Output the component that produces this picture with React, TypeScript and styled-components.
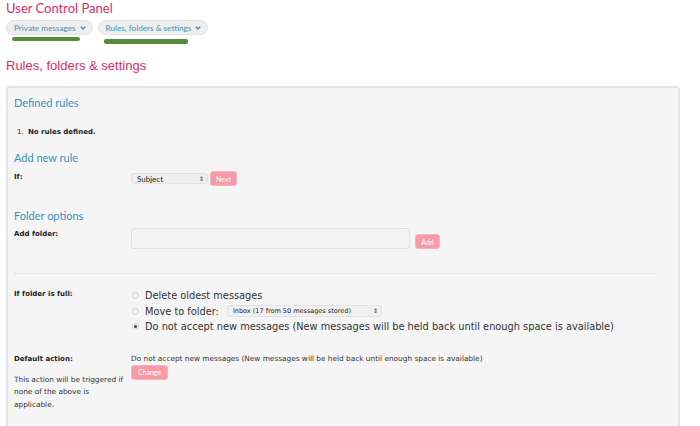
import styled, { createGlobalStyle } from "styled-components";

const GlobalStyle = createGlobalStyle`
  html, body {
    margin: 0;
    padding: 0;
    background: #fff;
    font-family: "DejaVu Sans", Verdana, sans-serif;
  }
`;

const PINK = "#d62d6e";
const BLUE = "#3b91bb";

const Page = styled.div`
  padding: 0 20px 0 6px;
  width: 700px;
  box-sizing: border-box;
  height: 426px;
  overflow: hidden;
`;

const Title = styled.h1`
  margin: 0;
  font-family: Lato, "Open Sans", sans-serif;
  font-weight: 400;
  font-size: 13px;
  line-height: 16px;
  color: ${PINK};
`;

const Tabs = styled.div`
  display: flex;
  gap: 5px;
  margin-top: 4px;
`;

const TabCol = styled.div`
  display: flex;
  flex-direction: column;
`;

const Tab = styled.div`
  display: flex;
  align-items: center;
  gap: 4px;
  height: 15px;
  box-sizing: border-box;
  padding: 0 6px 0 7px;
  border: 1px solid #e3e3e3;
  border-radius: 8px;
  background: #efefef;
  color: ${BLUE};
  font-family: Lato, "Open Sans", sans-serif;
  font-size: 8.2px;
  white-space: nowrap;
`;

const Mark = styled.div<{ $w: number; $dx: number; $dy: number; $h: number }>`
  width: ${(p) => p.$w}px;
  height: ${(p) => p.$h}px;
  margin: ${(p) => p.$dy}px 0 0 ${(p) => p.$dx}px;
  background: #5a8a3b;
  border-radius: 2px;
`;

const Heading = styled.h2`
  margin: 14px 0 0;
  font-family: "Liberation Sans", Arial, sans-serif;
  font-weight: 400;
  font-size: 13px;
  line-height: 16px;
  color: ${PINK};
`;

const Panel = styled.div`
  margin-top: 12px;
  width: 674px;
  height: 360px;
  box-sizing: border-box;
  border: 2px solid #e4e4e4;
  border-radius: 4px;
  background: #f5f5f5;
  padding: 8px 22px 0 6px;
`;

const SectionTitle = styled.h3<{ $top: number }>`
  margin: ${(p) => p.$top}px 0 0;
  font-family: Lato, "Liberation Sans", sans-serif;
  font-weight: 400;
  font-size: 11px;
  line-height: 14px;
  color: ${BLUE};
`;

const RuleList = styled.ol`
  margin: 17px 0 0;
  padding-left: 12px;
  font-size: 7px;
  line-height: 10px;
  color: #222;
  li {
    padding-left: 2px;
  }
  li span {
    font-weight: 700;
  }
`;

const Row = styled.div<{ $top: number }>`
  display: grid;
  grid-template-columns: 117px 1fr;
  margin-top: ${(p) => p.$top}px;
`;

const Label = styled.div`
  font-size: 7px;
  font-weight: 700;
  line-height: 12px;
  color: #222;
`;

const Field = styled.div`
  display: flex;
  align-items: center;
  gap: 2px;
`;

const FakeSelect = styled.div<{ $w: number }>`
  display: flex;
  align-items: center;
  justify-content: space-between;
  width: ${(p) => p.$w}px;
  height: 11px;
  box-sizing: border-box;
  padding: 0 3px 0 5px;
  border: 1px solid #e2e2e2;
  border-radius: 3px;
  background: #efefef;
  color: #222;
  font-family: Lato, "Liberation Sans", sans-serif;
  font-size: 8px;
  white-space: nowrap;
`;

const Arrows = styled.span`
  font-size: 6px;
  line-height: 1;
  color: #333;
`;

const PinkButton = styled.div<{ $w: number }>`
  width: ${(p) => p.$w}px;
  height: 15px;
  box-sizing: border-box;
  display: flex;
  align-items: center;
  justify-content: center;
  background: #f59aa6;
  border: 1px solid #f3b6bd;
  border-radius: 3px;
  color: #fff;
  font-family: Lato, "Liberation Sans", sans-serif;
  font-size: 7px;
`;

const TextInput = styled.div`
  width: 279px;
  height: 21px;
  box-sizing: border-box;
  border: 1px solid #e2e2e2;
  border-radius: 3px;
  background: #f3f3f3;
`;

const AddField = styled(Field)`
  align-items: flex-start;
  gap: 5px;
  & > ${PinkButton} {
    margin-top: 6px;
  }
`;

const Divider = styled.div`
  margin: 24px 0 0 0;
  border-top: 1px dotted #e0e0e0;
`;

const Radios = styled.div`
  display: flex;
  flex-direction: column;
  padding-left: 1px;
`;

const RadioRow = styled.div`
  display: flex;
  align-items: center;
  gap: 6px;
  height: 15.5px;
  font-size: 9.8px;
  color: #333;
  white-space: nowrap;
`;

const Radio = styled.span<{ $on?: boolean }>`
  width: 7px;
  height: 7px;
  box-sizing: border-box;
  border-radius: 50%;
  border: 1px solid #cfcfcf;
  background: #f3f3f3;
  display: flex;
  align-items: center;
  justify-content: center;
  &::after {
    content: "";
    width: 3px;
    height: 3px;
    border-radius: 50%;
    background: ${(p) => (p.$on ? "#444" : "transparent")};
  }
`;

const InlineSelect = styled(FakeSelect)`
  font-family: "DejaVu Sans", Verdana, sans-serif;
  font-size: 6.5px;
  margin-left: 2px;
  height: 12px;
  background: #f0f0f0;
`;

const LeftCol = styled.div`
  display: flex;
  flex-direction: column;
`;

const Help = styled.p`
  margin: 9px 0 0;
  font-size: 7.35px;
  line-height: 12.5px;
  color: #333;
  width: 112px;
`;

const Plain = styled.div`
  font-size: 7.35px;
  line-height: 12px;
  color: #333;
  white-space: nowrap;
`;

const Chevron = () => (
  <svg width="6" height="4" viewBox="0 0 6 4">
    <path d="M0.8 0.8 L3 3 L5.2 0.8" fill="none" stroke={BLUE} strokeWidth="1.4" />
  </svg>
);

const NOT_ACCEPT =
  "Do not accept new messages (New messages will be held back until enough space is available)";

export default function App() {
  return (
    <>
      <GlobalStyle />
      <Page>
        <Title>User Control Panel</Title>
        <Tabs>
          <TabCol>
            <Tab>
              Private messages <Chevron />
            </Tab>
            <Mark $w={68} $h={4} $dx={6} $dy={2} />
          </TabCol>
          <TabCol>
            <Tab>
              Rules, folders &amp; settings <Chevron />
            </Tab>
            <Mark $w={84} $h={5} $dx={6} $dy={4} />
          </TabCol>
        </Tabs>
        <Heading>Rules, folders &amp; settings</Heading>
        <Panel>
          <SectionTitle $top={0}>Defined rules</SectionTitle>
          <RuleList>
            <li>
              <span>No rules defined.</span>
            </li>
          </RuleList>
          <SectionTitle $top={14}>Add new rule</SectionTitle>
          <Row $top={6}>
            <Label>If:</Label>
            <Field>
              <FakeSelect $w={77}>
                Subject <Arrows>⇕</Arrows>
              </FakeSelect>
              <PinkButton $w={27}>Next</PinkButton>
            </Field>
          </Row>
          <SectionTitle $top={23}>Folder options</SectionTitle>
          <Row $top={5}>
            <Label>Add folder:</Label>
            <AddField>
              <TextInput />
              <PinkButton $w={25}>Add</PinkButton>
            </AddField>
          </Row>
          <Divider />
          <Row $top={14}>
            <Label>If folder is full:</Label>
            <Radios>
              <RadioRow>
                <Radio />
                Delete oldest messages
              </RadioRow>
              <RadioRow>
                <Radio />
                Move to folder:
                <InlineSelect $w={155}>
                  Inbox (17 from 50 messages stored) <Arrows>⇕</Arrows>
                </InlineSelect>
              </RadioRow>
              <RadioRow>
                <Radio $on />
                {NOT_ACCEPT}
              </RadioRow>
            </Radios>
          </Row>
          <Row $top={18}>
            <LeftCol>
              <Label>Default action:</Label>
              <Help>This action will be triggered if none of the above is applicable.</Help>
            </LeftCol>
            <LeftCol>
              <Plain>{NOT_ACCEPT}</Plain>
              <PinkButton $w={37}>Change</PinkButton>
            </LeftCol>
          </Row>
        </Panel>
      </Page>
    </>
  );
}
